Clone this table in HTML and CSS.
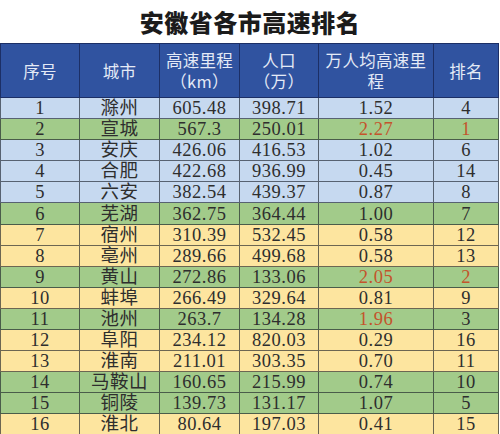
FILE: index.html
```html
<!DOCTYPE html>
<html lang="zh-CN">
<head>
<meta charset="utf-8">
<title>安徽省各市高速排名</title>
<link rel="stylesheet" href="styles.css">
</head>
<body>
<div class="page">
  <h1 class="title">安徽省各市高速排名</h1>
  <div class="table">
    <div class="row head">
      <div class="cell"><span class="ln">序号</span></div>
      <div class="cell"><span class="ln">城市</span></div>
      <div class="cell"><span class="ln">高速里程</span><span class="ln">（km）</span></div>
      <div class="cell"><span class="ln">人口</span><span class="ln">（万）</span></div>
      <div class="cell"><span class="ln">万人均高速里</span><span class="ln">程</span></div>
      <div class="cell"><span class="ln">排名</span></div>
    </div>
    <div class="row blue"><div class="cell">1</div><div class="cell">滁州</div><div class="cell">605.48</div><div class="cell">398.71</div><div class="cell">1.52</div><div class="cell">4</div></div>
    <div class="row green"><div class="cell">2</div><div class="cell">宣城</div><div class="cell">567.3</div><div class="cell">250.01</div><div class="cell red">2.27</div><div class="cell red">1</div></div>
    <div class="row blue"><div class="cell">3</div><div class="cell">安庆</div><div class="cell">426.06</div><div class="cell">416.53</div><div class="cell">1.02</div><div class="cell">6</div></div>
    <div class="row blue"><div class="cell">4</div><div class="cell">合肥</div><div class="cell">422.68</div><div class="cell">936.99</div><div class="cell">0.45</div><div class="cell">14</div></div>
    <div class="row blue"><div class="cell">5</div><div class="cell">六安</div><div class="cell">382.54</div><div class="cell">439.37</div><div class="cell">0.87</div><div class="cell">8</div></div>
    <div class="row green"><div class="cell">6</div><div class="cell">芜湖</div><div class="cell">362.75</div><div class="cell">364.44</div><div class="cell">1.00</div><div class="cell">7</div></div>
    <div class="row yellow"><div class="cell">7</div><div class="cell">宿州</div><div class="cell">310.39</div><div class="cell">532.45</div><div class="cell">0.58</div><div class="cell">12</div></div>
    <div class="row yellow"><div class="cell">8</div><div class="cell">亳州</div><div class="cell">289.66</div><div class="cell">499.68</div><div class="cell">0.58</div><div class="cell">13</div></div>
    <div class="row green"><div class="cell">9</div><div class="cell">黄山</div><div class="cell">272.86</div><div class="cell">133.06</div><div class="cell red">2.05</div><div class="cell red">2</div></div>
    <div class="row yellow"><div class="cell">10</div><div class="cell">蚌埠</div><div class="cell">266.49</div><div class="cell">329.64</div><div class="cell">0.81</div><div class="cell">9</div></div>
    <div class="row green"><div class="cell">11</div><div class="cell">池州</div><div class="cell">263.7</div><div class="cell">134.28</div><div class="cell red">1.96</div><div class="cell">3</div></div>
    <div class="row yellow"><div class="cell">12</div><div class="cell">阜阳</div><div class="cell">234.12</div><div class="cell">820.03</div><div class="cell">0.29</div><div class="cell">16</div></div>
    <div class="row yellow"><div class="cell">13</div><div class="cell">淮南</div><div class="cell">211.01</div><div class="cell">303.35</div><div class="cell">0.70</div><div class="cell">11</div></div>
    <div class="row green"><div class="cell">14</div><div class="cell">马鞍山</div><div class="cell">160.65</div><div class="cell">215.99</div><div class="cell">0.74</div><div class="cell">10</div></div>
    <div class="row green"><div class="cell">15</div><div class="cell">铜陵</div><div class="cell">139.73</div><div class="cell">131.17</div><div class="cell">1.07</div><div class="cell">5</div></div>
    <div class="row yellow"><div class="cell">16</div><div class="cell">淮北</div><div class="cell">80.64</div><div class="cell">197.03</div><div class="cell">0.41</div><div class="cell">15</div></div>
  </div>
</div>
</body>
</html>
```
FILE: styles.css
```css
html, body {
  margin: 0;
  padding: 0;
  background: #ffffff;
  overflow: hidden;
}
.page {
  width: 500px;
  font-family: "Liberation Serif", "Noto Sans CJK SC", serif;
  color: #2e2e2e;
}
.title {
  margin: 0;
  height: 43px;
  line-height: 43px;
  text-align: center;
  font-family: "Noto Sans CJK SC", sans-serif;
  font-weight: 900;
  font-size: 24px;
  letter-spacing: 0.5px;
  color: #1b1b1b;
}
.table {
  width: 499px;
}
.row {
  display: grid;
  grid-template-columns: 80px 80px 80px 79px 115px 65px;
  height: 21.1px;
}
.cell {
  box-sizing: border-box;
  border-right: 1px solid rgba(20, 25, 35, 0.62);
  border-bottom: 1px solid rgba(20, 25, 35, 0.62);
  display: flex;
  flex-direction: column;
  align-items: center;
  justify-content: center;
  text-align: center;
  font-size: 18.5px;
  line-height: 20px;
  letter-spacing: 0.5px;
  white-space: nowrap;
}
.cell:first-child {
  border-left: 1px solid rgba(20, 25, 35, 0.62);
}
.head {
  height: 55px;
}
.head .cell {
  background: #3053a0;
  color: #e4eaf6;
  font-family: "Noto Sans CJK SC", sans-serif;
  font-size: 16.5px;
  letter-spacing: 0.3px;
  border-top: 1px solid #1c2f66;
  border-color: #1c2f66;
  padding-top: 1px;
}
.ln {
  display: block;
  height: 21px;
  line-height: 21px;
}
.blue .cell { background: #c6d9f0; }
.green .cell { background: #a2cb8a; }
.yellow .cell { background: #fde59f; }
.red { color: #c4542c; }
```
